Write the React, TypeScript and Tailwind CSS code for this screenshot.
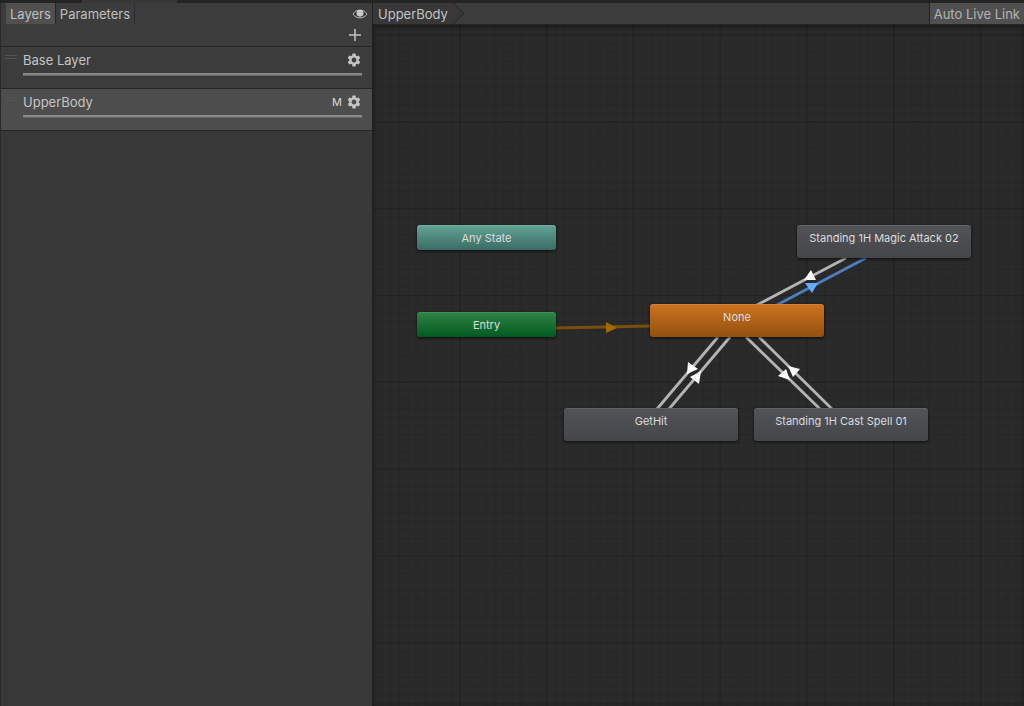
import { MdSettings } from "react-icons/md";

type Layer = { name: string; masked?: boolean; selected?: boolean };

const LAYERS: Layer[] = [
  { name: "Base Layer" },
  { name: "UpperBody", masked: true, selected: true },
];

type StateNode = { label: string; x: number; y: number; className: string };

const SMALL = "h-[25px] w-[139px]";
const LARGE = "h-[33px] w-[174px]";
const GRAY = "from-[#515357] to-[#45464a]";

// positions are in canvas units, (0, 0) is the top left of the graph view
const NODES: StateNode[] = [
  { label: "Any State", x: 44, y: 200, className: `${SMALL} from-[#62a596] to-[#3b6c64]` },
  { label: "Entry", x: 44, y: 287, className: `${SMALL} from-[#2d8545] to-[#005a20]` },
  { label: "None", x: 277, y: 279, className: `${LARGE} from-[#cd7420] to-[#93500f]` },
  { label: "Standing 1H Magic Attack 02", x: 424, y: 200, className: `${LARGE} ${GRAY}` },
  { label: "GetHit", x: 191, y: 383, className: `${LARGE} ${GRAY}` },
  { label: "Standing 1H Cast Spell 01", x: 381, y: 383, className: `${LARGE} ${GRAY}` },
];

const TRANSITIONS = [
  { line: [183, 303, 278, 301], arrow: "233,297 233,308 244,303", stroke: "#7a4f08", fill: "#a06a00" },
  { line: [473, 233, 382, 281], arrow: "438,245 431,255 443,255", stroke: "#b4b4b4", fill: "#ffffff" },
  { line: [493, 233, 402, 281], arrow: "432,258 445,258 439,268", stroke: "#4a80c0", fill: "#62acff" },
  { line: [345, 312, 284, 384], arrow: "315,337 325,344 314,349", stroke: "#b4b4b4", fill: "#ffffff" },
  { line: [357, 312, 296, 384], arrow: "328,346 317,352 326,359", stroke: "#b4b4b4", fill: "#ffffff" },
  { line: [373, 312, 447, 384], arrow: "413,344 405,351 417,355", stroke: "#b4b4b4", fill: "#ffffff" },
  { line: [386, 312, 459, 384], arrow: "415,341 427,344 420,352", stroke: "#b4b4b4", fill: "#ffffff" },
];

function EyeIcon() {
  return (
    <svg width="16" height="12" viewBox="0 0 16 12" aria-hidden="true">
      <path d="M1 6C4 .8 12 .8 15 6 12 11.2 4 11.2 1 6Z" fill="none" stroke="#b4b4b4" />
      <circle cx="8" cy="5.2" r="3.4" fill="#c8c8c8" />
    </svg>
  );
}

function PlusIcon() {
  return (
    <svg width="12" height="12" viewBox="0 0 12 12" aria-hidden="true">
      <path d="M6 0V12M0 6H12" stroke="#c4c4c4" strokeWidth="1.5" />
    </svg>
  );
}

function LayerRow({ name, masked, selected }: Layer) {
  return (
    <li
      className={`relative h-[42px] border-b border-[#262626] pr-[10px] pl-[22px] ${
        selected ? "bg-[#4d4d4d]" : "bg-[#3c3c3c]"
      }`}
    >
      <span className="absolute top-2 left-1 h-1 w-3 border-y border-[#555555]" />
      <div className="flex h-[26px] items-center">
        <span className="flex-1 text-[#c4c4c4]">{name}</span>
        {masked && <span className="mr-1 text-[11px] text-[#d8d8d8]">M</span>}
        <button aria-label={`${name} settings`} className="text-[#c4c4c4]">
          <MdSettings size={16} />
        </button>
      </div>
      <div className="h-[3px] border-b border-[#666666] bg-[#888888]" />
    </li>
  );
}

function LayersPanel() {
  return (
    <aside className="w-[373px] shrink-0 border-x border-l-[#2a2a2a] border-r-[#202020] bg-[#383838]">
      <div className="flex h-[21px] items-center bg-[#3c3c3c] pr-1 pl-[5px]">
        <button className="h-full border-r border-[#262626] bg-[#505050] px-1 text-[#c0c0c0]">
          Layers
        </button>
        <button className="h-full border-r border-[#2c2c2c] px-1 text-[#c0c0c0]">Parameters</button>
        <button aria-label="Toggle panel" className="ml-auto">
          <EyeIcon />
        </button>
      </div>
      <div className="flex h-[23px] items-center justify-end border-b border-[#262626] bg-[#3c3c3c] pr-[11px]">
        <button aria-label="Add layer">
          <PlusIcon />
        </button>
      </div>
      <ul>
        {LAYERS.map((layer) => (
          <LayerRow key={layer.name} {...layer} />
        ))}
      </ul>
    </aside>
  );
}

function Grid() {
  return (
    <>
      <defs>
        <pattern id="minor" x="0" y="1" width="8.68" height="8.68" patternUnits="userSpaceOnUse">
          <path d="M.5 0V8.68M0 .5H8.68" stroke="#262626" fill="none" />
        </pattern>
        <pattern id="major" x="-0.8" y="9.5" width="86.8" height="86.8" patternUnits="userSpaceOnUse">
          <path d="M.5 0V86.8M0 .5H86.8" stroke="#212121" fill="none" />
        </pattern>
      </defs>
      <rect width="100%" height="100%" fill="url(#minor)" />
      <rect width="100%" height="100%" fill="url(#major)" />
    </>
  );
}

function Graph() {
  return (
    <div className="relative flex-1 overflow-hidden bg-[#2a2a2a]">
      <svg className="absolute inset-0 h-full w-full" aria-hidden="true">
        <Grid />
        {TRANSITIONS.map(({ line: [x1, y1, x2, y2], arrow, stroke, fill }) => (
          <g key={arrow}>
            <line x1={x1} y1={y1} x2={x2} y2={y2} stroke={stroke} strokeWidth="2.8" />
            <polygon points={arrow} fill={fill} />
          </g>
        ))}
      </svg>
      <div className="absolute inset-0 shadow-[inset_0_2px_6px_rgba(0,0,0,0.35)]" />
      {NODES.map((node) => (
        <div
          key={node.label}
          className={`absolute rounded-[3px] bg-linear-to-b pt-[5px] text-center text-[11px] leading-4 text-[#dcdcdc] shadow-[0_1px_3px_rgba(0,0,0,0.7),inset_0_1px_0_rgba(255,255,255,0.1)] ${node.className}`}
          style={{ left: node.x, top: node.y }}
        >
          {node.label}
        </div>
      ))}
    </div>
  );
}

export default function App() {
  return (
    <div className="flex h-screen flex-col overflow-hidden bg-[#383838] font-[Inter,sans-serif] text-[13px] leading-4">
      <div className="flex h-[3px] shrink-0 bg-[#242424] pl-[82px]">
        <div className="w-[95px] bg-[#383838]" />
      </div>
      <div className="flex min-h-0 flex-1">
        <LayersPanel />
        <main className="flex min-w-0 flex-1 flex-col">
          <div className="flex h-[22px] shrink-0 items-stretch border-b border-[#232323] bg-[#3c3c3c]">
            <button className="bg-[#383838] px-[5px] text-[#c4c4c4]">UpperBody</button>
            <svg width="12" height="21" viewBox="0 0 12 21" aria-hidden="true">
              <path d="M0 0L11 10.5 0 21Z" fill="#383838" />
              <path d="M0 0L11 10.5 0 21" fill="none" stroke="#262626" />
            </svg>
            <button className="ml-auto border-l border-[#232323] bg-[#505050] px-1 text-[#b4b4b4]">
              Auto Live Link
            </button>
          </div>
          <Graph />
        </main>
      </div>
    </div>
  );
}
